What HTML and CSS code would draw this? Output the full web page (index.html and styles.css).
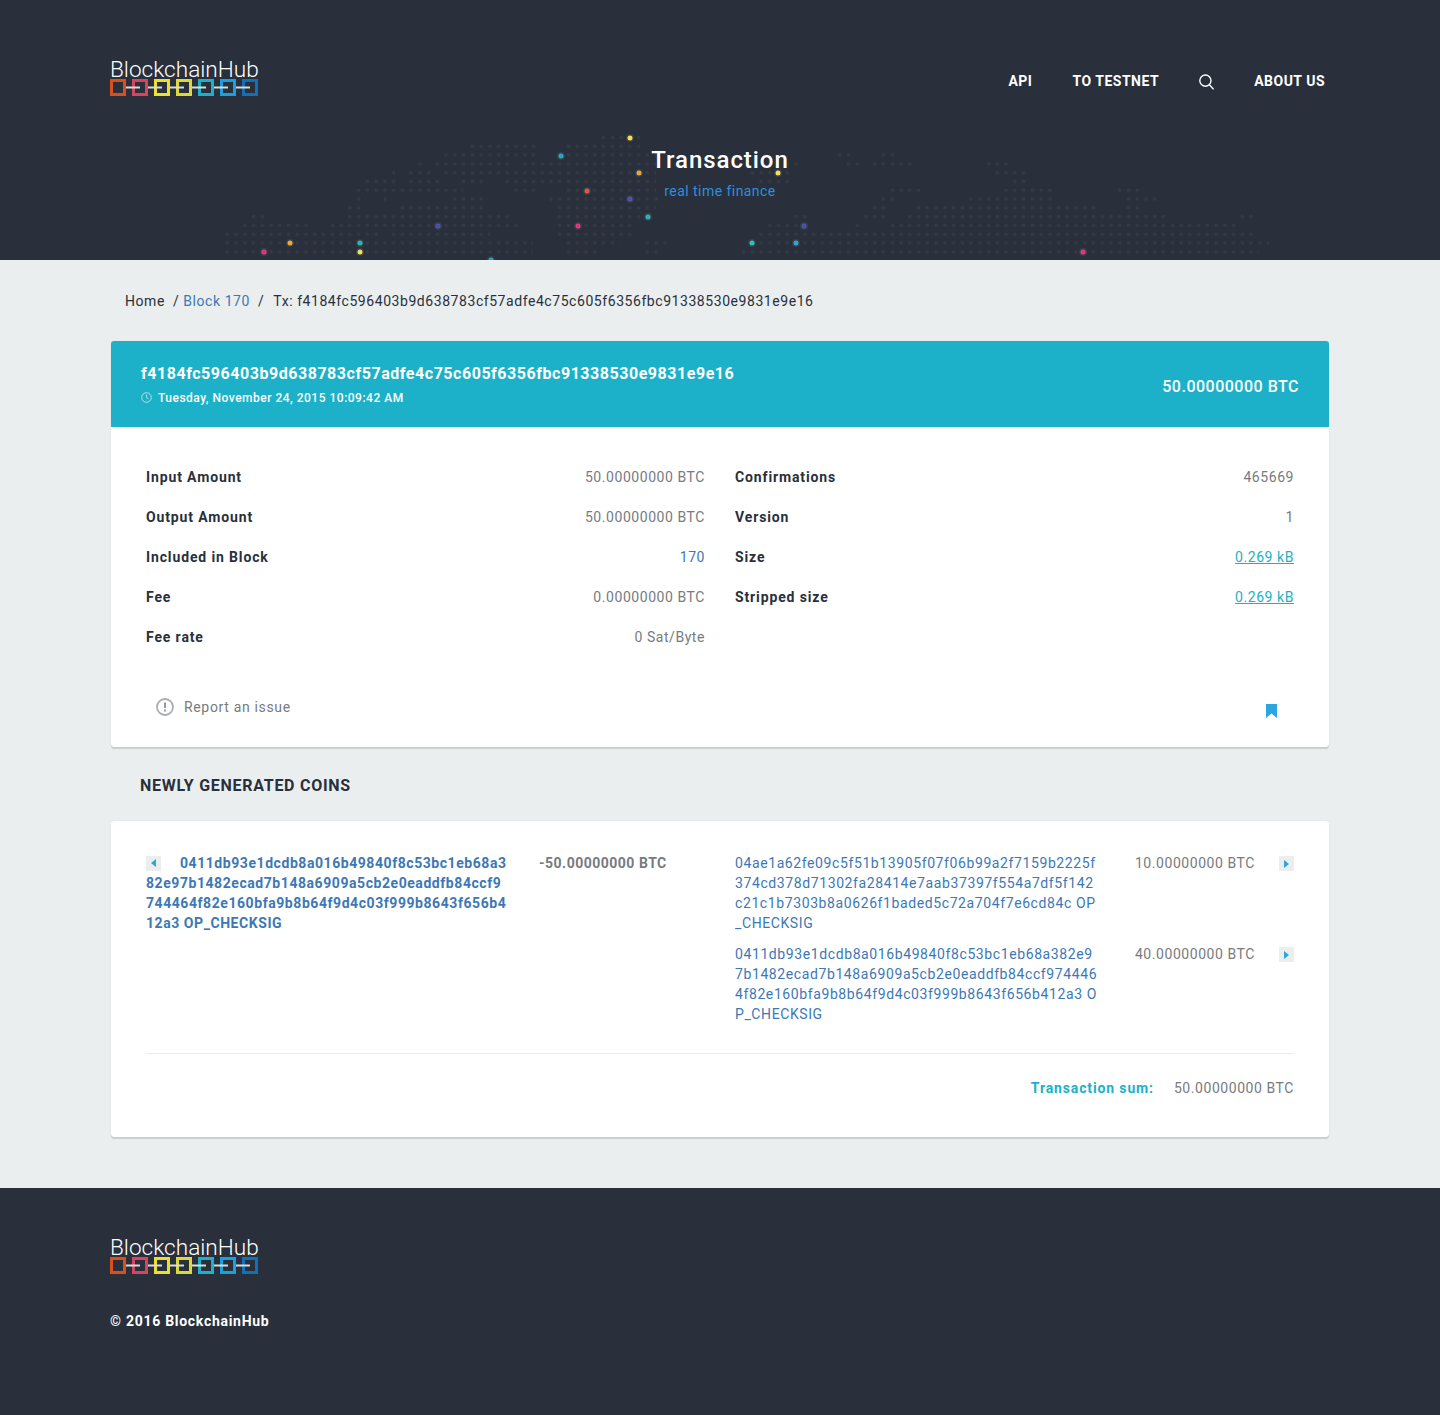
FILE: index.html
```html
<!DOCTYPE html>
<html lang="en">
<head>
  <meta charset="UTF-8">
  <meta name="viewport" content="width=device-width,initial-scale=1">
  <title>Transaction - BlockchainHub</title>
  <link rel="stylesheet" href="styles.css">
</head>
<body>
  <header class="hero">
    <!-- world map: rows of dots cut out of a dot pattern, plus the coloured pins -->
    <svg class="hero-map" width="1440" height="260" viewBox="0 0 1440 260">
      <defs>
        <pattern id="mapDots" patternUnits="userSpaceOnUse" x="223" y="133" width="8.75" height="8.8">
          <circle cx="4.3" cy="4.4" r="1.8" fill="#333a46"/>
        </pattern>
      </defs>
      <path fill="url(#mapDots)" d="M600 133h44v8h-44z
        M470 142h70v8h-70zM564 142h80v8h-80z
        M444 151h96v8h-96zM564 151h92v8h-92zM835 151h17v8h-17zM878 151h20v8h-20z
        M416 160h8v8h-8zM434 160h79v8h-79zM520 160h136v8h-136zM785 160h13v8h-13zM842 160h20v8h-20zM871 160h41v8h-41zM985 160h24v8h-24z
        M390 168h8v8h-8zM407 168h26v8h-26zM444 168h212v8h-212zM746 168h45v8h-45zM992 168h35v8h-35z
        M364 177h36v8h-36zM407 177h26v8h-26zM434 177h8v8h-8zM460 177h26v8h-26zM504 177h152v8h-152zM756 177h35v8h-35zM1010 177h17v8h-17z
        M354 186h109v8h-109zM510 186h30v8h-30zM564 186h92v8h-92zM888 186h35v8h-35zM1003 186h49v8h-49zM1113 186h28v8h-28z
        M354 195h12v8h-12zM384 195h8v8h-8zM450 195h36v8h-36zM547 195h116v8h-116zM878 195h20v8h-20zM967 195h85v8h-85zM1124 195h35v8h-35z
        M347 204h19v8h-19zM397 204h89v8h-89zM554 204h102v8h-102zM871 204h16v8h-16zM913 204h185v8h-185zM1124 204h17v8h-17z
        M250 212h16v8h-16zM347 212h166v8h-166zM554 212h99v8h-99zM792 212h17v8h-17zM863 212h24v8h-24zM906 212h260v8h-260zM1238 212h17v8h-17z
        M242 221h71v8h-71zM330 221h190v8h-190zM554 221h82v8h-82zM763 221h42v8h-42zM853 221h8v8h-8zM888 221h349v8h-349z
        M224 230h159v8h-159zM390 230h100v8h-100zM554 230h82v8h-82zM756 230h499v8h-499z
        M224 239h309v8h-309zM564 239h56v8h-56zM644 239h26v8h-26zM753 239h516v8h-516z
        M224 248h309v8h-309zM564 248h36v8h-36zM644 248h16v8h-16zM738 248h521v8h-521z"/>
      <g class="pins">
        <circle cx="630" cy="138" r="2.5" fill="#f2e23c"/>
        <circle cx="561" cy="156" r="2.5" fill="#1c9fc4"/>
        <circle cx="639" cy="173" r="2.5" fill="#e8a132"/>
        <circle cx="587" cy="191" r="2.5" fill="#d9503f"/>
        <circle cx="630" cy="199" r="2.5" fill="#4a4aa8"/>
        <circle cx="648" cy="217" r="2.5" fill="#1fb0b8"/>
        <circle cx="578" cy="226" r="2.5" fill="#e02a76"/>
        <circle cx="438" cy="226" r="2.5" fill="#3f48b0"/>
        <circle cx="290" cy="243" r="2.5" fill="#eaa52c"/>
        <circle cx="360" cy="243" r="2.5" fill="#1fb0b0"/>
        <circle cx="264" cy="252" r="2.5" fill="#e02a76"/>
        <circle cx="360" cy="252" r="2.5" fill="#f2e23c"/>
        <circle cx="491" cy="260" r="2.5" fill="#1c9fc4"/>
        <circle cx="778" cy="173" r="2.5" fill="#f5dd50"/>
        <circle cx="804" cy="226" r="2.5" fill="#3f48b0"/>
        <circle cx="752" cy="243" r="2.5" fill="#1fc0b0"/>
        <circle cx="796" cy="243" r="2.5" fill="#2aa0cc"/>
        <circle cx="1083" cy="252" r="2.5" fill="#e02a76"/>
      </g>
    </svg>

    <div class="topbar">
      <a class="logo" href="#">
        <span class="logo-name">BlockchainHub</span>
        <svg class="logo-chain" width="150" height="18" viewBox="0 0 150 18">
          <g fill="none" stroke-width="3">
            <rect x="1.5" y="1.5" width="13" height="14" stroke="#d9501e"/>
            <rect x="23.5" y="1.5" width="13" height="14" stroke="#d6455f"/>
            <rect x="45.5" y="1.5" width="13" height="14" stroke="#ece02e"/>
            <rect x="67.5" y="1.5" width="13" height="14" stroke="#dcd93a"/>
            <rect x="89.5" y="1.5" width="13" height="14" stroke="#1ab2c9"/>
            <rect x="111.5" y="1.5" width="13" height="14" stroke="#18a0e0"/>
            <rect x="133.5" y="1.5" width="13" height="14" stroke="#1070b8"/>
          </g>
          <path stroke="#d9dcdc" stroke-width="2" d="M16 8.5h14M38 8.5h14M60 8.5h14M82 8.5h14M104 8.5h14M126 8.5h14"/>
        </svg>
      </a>
      <nav class="nav">
        <a href="#">API</a>
        <a href="#">To testnet</a>
        <a class="nav-search" href="#" aria-label="Search">
          <svg width="15" height="16" viewBox="0 0 15 16" fill="none" stroke="#fff" stroke-width="1.4">
            <circle cx="6.4" cy="6.6" r="5.6"/>
            <path d="M10.4 10.7l4.2 4.6"/>
          </svg>
        </a>
        <a href="#">About us</a>
      </nav>
    </div>

    <div class="hero-title">
      <h1>Transaction</h1>
      <p>real time finance</p>
    </div>
  </header>

  <main class="page">
    <div class="crumbs">
      <a class="crumb-home" href="#">Home</a>
      <span class="crumb-sep crumb-sep-first">/</span>
      <a href="#">Block 170</a>
      <span class="crumb-sep">/</span>
      <span class="crumb-tx">Tx: f4184fc596403b9d638783cf57adfe4c75c605f6356fbc91338530e9831e9e16</span>
    </div>

    <section class="card">
      <div class="tx-head">
        <div>
          <div class="tx-hash">f4184fc596403b9d638783cf57adfe4c75c605f6356fbc91338530e9831e9e16</div>
          <div class="tx-date">
            <svg width="11" height="11" viewBox="0 0 11 11" fill="none" stroke="#bfe6ee" stroke-width="0.9">
              <circle cx="5.5" cy="5.5" r="4.8"/>
              <path d="M5.5 2.6v3l2 1.2"/>
            </svg>
            Tuesday, November 24, 2015 10:09:42 AM
          </div>
        </div>
        <div class="tx-total">50.00000000 BTC</div>
      </div>

      <div class="tx-info">
        <dl class="info-col">
          <div class="info-row"><dt>Input Amount</dt><dd>50.00000000 BTC</dd></div>
          <div class="info-row"><dt>Output Amount</dt><dd>50.00000000 BTC</dd></div>
          <div class="info-row"><dt>Included in Block</dt><dd><a href="#">170</a></dd></div>
          <div class="info-row"><dt>Fee</dt><dd>0.00000000 BTC</dd></div>
          <div class="info-row"><dt>Fee rate</dt><dd>0 Sat/Byte</dd></div>
        </dl>
        <dl class="info-col">
          <div class="info-row"><dt>Confirmations</dt><dd>465669</dd></div>
          <div class="info-row"><dt>Version</dt><dd>1</dd></div>
          <div class="info-row"><dt>Size</dt><dd><a class="teal-link" href="#">0.269 kB</a></dd></div>
          <div class="info-row"><dt>Stripped size</dt><dd><a class="teal-link" href="#">0.269 kB</a></dd></div>
        </dl>
      </div>

      <div class="tx-actions">
        <a class="report" href="#">
          <svg width="18" height="18" viewBox="0 0 18 18" fill="none">
            <circle cx="9" cy="9" r="8" stroke="#a9adb0" stroke-width="1.8"/>
            <path d="M9 4.6v5.4M9 11.6v1.8" stroke="#8a8f93" stroke-width="1.8"/>
          </svg>
          Report an issue
        </a>
        <svg class="bookmark" width="11" height="14" viewBox="0 0 11 14">
          <path d="M0 0h11v14L5.5 9.6 0 14z" fill="#2ba6e0"/>
        </svg>
      </div>
    </section>

    <h2 class="section-title">Newly Generated Coins</h2>

    <section class="card io-card">
      <div class="io-cols">
        <div class="io-side">
          <div class="io-row">
            <div class="io-addr io-addr-in">
              <span class="io-arrow io-arrow-in"><i class="tri-left"></i></span>0411db93e1dcdb8a016b49840f8c53bc1eb68a382e97b1482ecad7b148a6909a5cb2e0eaddfb84ccf9744464f82e160bfa9b8b64f9d4c03f999b8643f656b412a3 OP_CHECKSIG
            </div>
            <div class="io-amount io-amount-in">-50.00000000 BTC</div>
          </div>
        </div>
        <div class="io-side">
          <div class="io-row">
            <div class="io-addr">04ae1a62fe09c5f51b13905f07f06b99a2f7159b2225f374cd378d71302fa28414e7aab37397f554a7df5f142c21c1b7303b8a0626f1baded5c72a704f7e6cd84c OP_CHECKSIG</div>
            <div class="io-amount">10.00000000 BTC</div>
            <span class="io-arrow"><i class="tri-right"></i></span>
          </div>
          <div class="io-row">
            <div class="io-addr">0411db93e1dcdb8a016b49840f8c53bc1eb68a382e97b1482ecad7b148a6909a5cb2e0eaddfb84ccf9744464f82e160bfa9b8b64f9d4c03f999b8643f656b412a3 OP_CHECKSIG</div>
            <div class="io-amount">40.00000000 BTC</div>
            <span class="io-arrow"><i class="tri-right"></i></span>
          </div>
        </div>
      </div>
      <div class="io-sum">
        <strong>Transaction sum:</strong>
        <span>50.00000000 BTC</span>
      </div>
    </section>
  </main>

  <footer class="footer">
    <a class="logo" href="#">
      <span class="logo-name">BlockchainHub</span>
      <svg class="logo-chain" width="150" height="18" viewBox="0 0 150 18">
        <g fill="none" stroke-width="3">
          <rect x="1.5" y="1.5" width="13" height="14" stroke="#d9501e"/>
          <rect x="23.5" y="1.5" width="13" height="14" stroke="#d6455f"/>
          <rect x="45.5" y="1.5" width="13" height="14" stroke="#ece02e"/>
          <rect x="67.5" y="1.5" width="13" height="14" stroke="#dcd93a"/>
          <rect x="89.5" y="1.5" width="13" height="14" stroke="#1ab2c9"/>
          <rect x="111.5" y="1.5" width="13" height="14" stroke="#18a0e0"/>
          <rect x="133.5" y="1.5" width="13" height="14" stroke="#1070b8"/>
        </g>
        <path stroke="#d9dcdc" stroke-width="2" d="M16 8.5h14M38 8.5h14M60 8.5h14M82 8.5h14M104 8.5h14M126 8.5h14"/>
      </svg>
    </a>
    <p class="copyright">© 2016 BlockchainHub</p>
  </footer>
</body>
</html>
```

FILE: styles.css
```css
* { box-sizing: border-box; }
body { margin: 0; background: #ebeeef; color: #29303b; font-family: Roboto, "Liberation Sans", sans-serif; font-size: 14px; line-height: 20px; letter-spacing: 0.56px; }
a { text-decoration: none; color: inherit; }
h1, h2, p, dl, dd { margin: 0; }

/* header */
.hero { position: relative; height: 260px; background: #29303b; color: #fff; overflow: hidden; }
.hero-map { position: absolute; left: 0; top: 0; }
.pins circle { stroke: rgba(255, 255, 255, 0.07); stroke-width: 3; }
.topbar { position: relative; display: flex; justify-content: space-between; align-items: flex-start; padding: 58px 115px 0 110px; }
.logo { display: block; width: 150px; }
.logo-name { display: block; padding-top: 1px; color: #fff; font-weight: 300; font-size: 22.6px; line-height: 22px; letter-spacing: 0; white-space: nowrap; }
.logo-chain { display: block; margin-top: -2px; }
.nav { display: flex; align-items: center; gap: 40px; margin-top: 13px; font-weight: 700; text-transform: uppercase; letter-spacing: 0.5px; }
.nav-search { display: flex; margin-top: 2px; }
.hero-title { position: relative; margin-top: 47px; text-align: center; }
.hero-title h1 { font-size: 24px; font-weight: 500; line-height: 32px; letter-spacing: 0.95px; }
.hero-title p { margin-top: 5px; color: #2b8fdc; letter-spacing: 0.45px; }

/* page */
.page { width: 1220px; margin: 0 auto; padding-bottom: 51px; }
.crumbs { display: flex; gap: 8px; padding: 31px 15px 30px; }
.crumbs a { color: #3d78b5; }
.crumbs .crumb-home { color: #29303b; }
.crumb-sep-first { margin-right: -4px; }
.crumb-tx { margin-left: 1px; }
.card { margin: 0 1px; background: #fff; border-radius: 3px; box-shadow: 0 2px 1px rgba(0, 0, 0, 0.13), 0 0 1px rgba(0, 0, 0, 0.15); }

.tx-head { display: flex; justify-content: space-between; align-items: center; height: 86px; padding: 2px 30px 0; background: #1cb1c8; color: #fff; border-radius: 3px 3px 0 0; }
.tx-hash { font-size: 16px; font-weight: 700; line-height: 22px; letter-spacing: 0.54px; }
.tx-date { display: flex; align-items: center; gap: 6px; margin-top: 3px; font-size: 12px; font-weight: 500; line-height: 20px; letter-spacing: 0.5px; }
.tx-total { margin-top: 4px; font-size: 16px; font-weight: 500; letter-spacing: 0.5px; }

.tx-info { display: grid; grid-template-columns: 1fr 1fr; gap: 30px; padding: 30px 35px 0 35px; }
.info-row { display: flex; justify-content: space-between; height: 40px; padding-top: 10px; }
dt { font-weight: 700; letter-spacing: 0.87px; }
dd { color: #777b7f; }
dd a { color: #3d78b5; }
dd .teal-link { color: #1cb1c8; text-decoration: underline; }

.tx-actions { display: flex; justify-content: space-between; align-items: center; height: 72px; margin-top: 18px; padding: 0 52px 8px 45px; }
.report { display: flex; align-items: center; gap: 10px; color: #777b7f; letter-spacing: 0.66px; }
.bookmark { margin-top: 8px; }

.section-title { padding: 29px 30px 25px; font-size: 16px; line-height: 20px; font-weight: 700; text-transform: uppercase; letter-spacing: 0.73px; }

/* inputs and outputs */
.io-card { padding: 32px 35px 39px; }
.io-cols { display: grid; grid-template-columns: 1fr 1fr; gap: 30px; padding-bottom: 18px; border-bottom: 1px solid #ebeeef; }
.io-row { display: flex; align-items: flex-start; margin-bottom: 11px; }
.io-addr { width: 363px; flex: none; color: #3d78b5; letter-spacing: 0.6px; word-break: break-all; }
.io-addr-in { width: 361px; font-weight: 700; letter-spacing: 0.56px; }
.io-amount { margin-left: auto; color: #777b7f; white-space: nowrap; }
.io-amount-in { margin-left: 32px; font-weight: 700; letter-spacing: 0.5px; }
.io-arrow { display: inline-flex; align-items: center; justify-content: center; flex: none; width: 15px; height: 15px; margin: 3px 0 0 24px; background: #ebeeef; }
.io-arrow-in { margin: 0 19px 0 0; vertical-align: 1px; }
.tri-left, .tri-right { width: 0; height: 0; border-style: solid; border-width: 4px 0 4px 5px; border-color: transparent transparent transparent #2ba6e0; }
.tri-left { border-width: 4px 5px 4px 0; border-color: transparent #2ba6e0 transparent transparent; }
.io-sum { display: flex; justify-content: flex-end; gap: 20px; padding-top: 24px; color: #777b7f; }
.io-sum strong { color: #1cb1c8; font-weight: 700; letter-spacing: 0.87px; }

/* footer */
.footer { height: 227px; padding: 48px 110px 0; background: #29303b; color: #fff; }
.copyright { margin-top: 36px; font-weight: 700; letter-spacing: 0.72px; }
```
